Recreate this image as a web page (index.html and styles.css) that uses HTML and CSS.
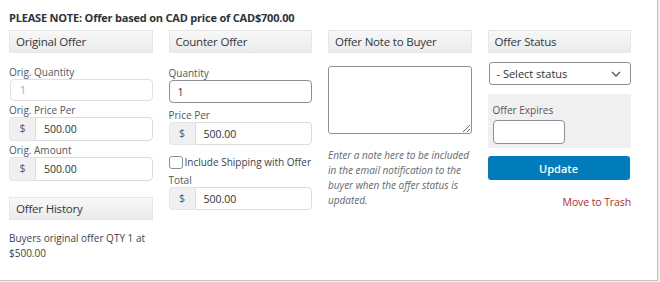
FILE: index.html
```html
<!DOCTYPE html>
<html>
<head>
<meta charset="utf-8">
<link rel="stylesheet" href="styles.css">
</head>
<body>
<div class="panel">
  <div class="note">PLEASE NOTE: Offer based on CAD price of CAD$700.00</div>
  <div class="grid">
    <div class="col">
      <div class="head">Original Offer</div>
      <label class="lbl l1">Orig. Quantity</label>
      <input class="inp disabled" type="text" value="1" disabled>
      <label class="lbl l2">Orig. Price Per</label>
      <div class="group"><span class="addon">$</span><input class="inp light" type="text" value="500.00"></div>
      <label class="lbl l2">Orig. Amount</label>
      <div class="group"><span class="addon">$</span><input class="inp light" type="text" value="500.00"></div>
      <div class="head h2">Offer History</div>
      <p class="history">Buyers original offer QTY 1 at<br>$500.00</p>
    </div>
    <div class="col">
      <div class="head">Counter Offer</div>
      <label class="lbl c1">Quantity</label>
      <input class="inp dark" type="text" value="1">
      <label class="lbl c2">Price Per</label>
      <div class="group g2"><span class="addon">$</span><input class="inp light" type="text" value="500.00"></div>
      <label class="check"><span class="box"></span>Include Shipping with Offer</label>
      <label class="lbl c3">Total</label>
      <div class="group g2"><span class="addon">$</span><input class="inp light" type="text" value="500.00"></div>
    </div>
    <div class="col">
      <div class="head">Offer Note to Buyer</div>
      <textarea class="note-area"></textarea>
      <p class="help">Enter a note here to be included in the email notification to the buyer when the offer status is updated.</p>
    </div>
    <div class="col">
      <div class="head">Offer Status</div>
      <div class="select"><span>- Select status</span><svg width="10" height="6" viewBox="0 0 10 6"><path d="M1 1l4 4 4-4" fill="none" stroke="#50575e" stroke-width="1.3"/></svg></div>
      <div class="expires">
        <label class="lbl e1">Offer Expires</label>
        <input class="inp dark small" type="text">
      </div>
      <button class="update">Update</button>
      <a class="trash">Move to Trash</a>
    </div>
  </div>
</div>
</body>
</html>
```
FILE: styles.css
```css
html, body {
  margin: 0;
  padding: 0;
  background: #f0f0f1;
}
body {
  font-family: "Open Sans", "Noto Sans", sans-serif;
  color: #3c434a;
}
.panel {
  width: 658px;
  height: 281px;
  box-sizing: border-box;
  background: #fff;
  border-right: 1px solid #c3c4c7;
  border-bottom: 1px solid #c3c4c7;
  padding: 11px 0 0 9px;
}
.note {
  font-size: 11px;
  font-weight: 700;
  line-height: 14px;
  color: #2c3338;
  letter-spacing: -0.2px;
}
.grid {
  display: grid;
  grid-template-columns: repeat(4, 143.5px);
  column-gap: 16px;
  margin-top: 5px;
}
.col {
  display: flex;
  flex-direction: column;
  min-width: 0;
}
.head {
  box-sizing: border-box;
  height: 23px;
  border: 1px solid #e6e6e6;
  background: linear-gradient(#f8f8f8, #ebebeb);
  font-size: 11.5px;
  line-height: 21px;
  padding-left: 6px;
  color: #32373c;
  letter-spacing: -0.2px;
}
.lbl {
  display: block;
  font-size: 10px;
  line-height: 14px;
  color: #50575e;
}
.l1 { margin-top: 12px; }
.l2 { margin-top: 2px; }
.c1 { margin-top: 13px; }
.c2 { margin-top: 5px; }
.c3 { margin-top: 4px; }
.inp {
  box-sizing: border-box;
  width: 100%;
  margin: 0;
  font-family: inherit;
  font-size: 10.5px;
  color: #2c3338;
  background: #fff;
  border-radius: 4px;
  outline: none;
}
.inp.disabled {
  height: 22px;
  border: 1px solid #e0e0e0;
  color: #a7aaad;
  padding: 0 9px;
  margin-left: 1px;
  width: 143px;
}
.inp.dark {
  height: 23px;
  border: 1px solid #8c8f94;
  padding: 0 8px;
}
.inp.light {
  height: 24px;
  border: 1px solid #dcdcde;
  border-radius: 0 4px 4px 0;
  padding: 0 8px;
  flex: 1;
  min-width: 0;
}
.group {
  display: flex;
  height: 24px;
}
.g2 { height: 23px; }
.g2 .inp.light { height: 23px; }
.addon {
  width: 26px;
  flex: none;
  box-sizing: border-box;
  background: #f0f0f0;
  border: 1px solid #e6e6e6;
  border-right: none;
  border-radius: 4px 0 0 4px;
  font-size: 10.5px;
  line-height: 21px;
  text-align: center;
  color: #50575e;
}
.h2 { margin-top: 16px; }
.history {
  margin: 11px 0 0;
  font-size: 10px;
  line-height: 14.5px;
  color: #3c434a;
}
.check {
  display: flex;
  align-items: center;
  margin-top: 10px;
  font-size: 10px;
  line-height: 14px;
  color: #3c434a;
  white-space: nowrap;
}
.box {
  width: 12px;
  height: 11px;
  border: 1px solid #8c8f94;
  border-radius: 3px;
  margin-right: 2px;
  flex: none;
}
.note-area {
  box-sizing: border-box;
  width: 144px;
  height: 68px;
  margin: 13px 0 0;
  border: 1px solid #8c8f94;
  border-radius: 3px;
  resize: both;
}
.help {
  margin: 14px 0 0;
  font-size: 10px;
  font-style: italic;
  line-height: 15px;
  color: #646970;
}
.select {
  box-sizing: border-box;
  height: 23px;
  margin: 9px 0 0 1px;
  border: 1px solid #8c8f94;
  border-radius: 3px;
  display: flex;
  align-items: center;
  justify-content: space-between;
  padding: 0 9px 0 7px;
  font-size: 11px;
  color: #2c3338;
}
.expires {
  margin-top: 9px;
  background: #f0f0f0;
  height: 54px;
  box-sizing: border-box;
  padding: 9px 0 0 5px;
}
.inp.small {
  width: 72px;
  height: 24px;
  margin-top: 3px;
}
.update {
  margin-top: 8px;
  height: 24px;
  border: none;
  border-radius: 3px;
  background: #007cba;
  color: #fff;
  font-family: inherit;
  font-size: 11px;
  font-weight: 600;
  width: 142px;
  padding: 0;
}
.trash {
  margin-top: 15px;
  align-self: flex-end;
  font-size: 10.5px;
  line-height: 14px;
  color: #b32d2e;
  letter-spacing: -0.1px;
}
```
